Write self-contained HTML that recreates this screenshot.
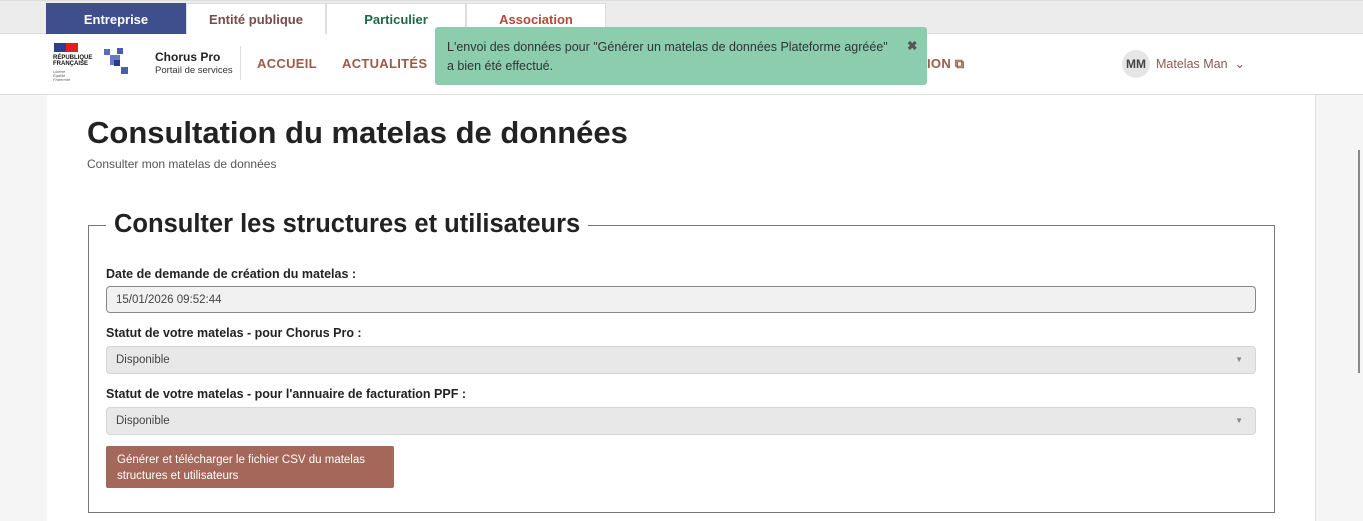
<!DOCTYPE html>
<html><head><meta charset="utf-8"><style>
*{box-sizing:border-box;margin:0;padding:0}
body{width:1363px;height:521px;overflow:hidden;background:#f5f5f5;font-family:"Liberation Sans",sans-serif;position:relative}
.top{position:absolute;left:0;top:0;width:1363px;height:34px;background:#ececec;border-top:1px solid #ddd;border-bottom:1px solid #ddd}
.tab{position:absolute;top:2px;height:32px;background:#fff;border:1px solid #ddd;border-bottom:none;font-size:13px;font-weight:bold;text-align:center;line-height:32px}
.hdr{position:absolute;left:0;top:34px;width:1363px;height:61px;background:#fff;border-bottom:1px solid #ddd}
.nav{position:absolute;top:22px;font-size:13px;font-weight:bold;color:#9a5b48;letter-spacing:.3px}
.main{position:absolute;left:47px;top:95px;width:1269px;height:426px;background:#fff;border-right:1px solid #ddd}
.toast{position:absolute;left:435px;top:27px;width:492px;height:58px;background:#8ccdae;border-radius:3px;font-size:12.5px;color:#333;padding:11px 12px;line-height:19px}
h1{position:absolute;left:87px;top:115px;font-size:31px;color:#222;font-weight:bold}
.sub{position:absolute;left:87px;top:157px;font-size:12px;color:#555}
.fs{position:absolute;left:88px;top:225px;width:1187px;height:288px;border:1px solid #777}
.legend{position:absolute;left:106px;top:210px;background:#fff;padding:0 8px;font-size:25.5px;font-weight:bold;color:#222}
.lbl{position:absolute;left:106px;font-size:12.5px;font-weight:bold;color:#222}
.in{position:absolute;left:106px;width:1150px;height:27px;border-radius:4px;font-size:11.5px;color:#444;padding-left:9px;line-height:26px}
.btn{position:absolute;left:106px;top:446px;width:288px;height:42px;background:#a4675a;border-radius:2px;color:#fff;font-size:11.5px;line-height:16px;padding:6px 11px}
</style></head><body>
<div class="top">
<div class="tab" style="left:46px;width:140px;background:#3f4e8c;color:#fff;border-color:#3f4e8c">Entreprise</div>
<div class="tab" style="left:186px;width:140px;color:#7a4a48">Entité publique</div>
<div class="tab" style="left:326px;width:140px;color:#1d6a4a">Particulier</div>
<div class="tab" style="left:466px;width:140px;color:#b24a3a">Association</div>
</div>
<div class="hdr">
<div style="position:absolute;left:54px;top:9px;width:12px;height:9px;background:#2b3f8f"></div>
<div style="position:absolute;left:66px;top:9px;width:12px;height:9px;background:#e02020"></div>
<div style="position:absolute;left:53px;top:21px;font-size:6px;font-weight:bold;line-height:6px;color:#111">RÉPUBLIQUE<br>FRANÇAISE</div>
<div style="position:absolute;left:53px;top:36px;font-size:4px;line-height:4px;color:#666;font-style:italic">Liberté<br>Égalité<br>Fraternité</div>
<svg style="position:absolute;left:102px;top:13px" width="28" height="30"><rect x="2" y="2" width="6" height="6" fill="#5a6cc0"/><rect x="15" y="1" width="6" height="6" fill="#4a5cb0"/><rect x="8" y="8" width="10" height="10" fill="#6878c8"/><rect x="12" y="13" width="6" height="6" fill="#2b3a8a"/><rect x="19" y="20" width="7" height="7" fill="#4a5cb0"/></svg>
<div style="position:absolute;left:155px;top:16px;font-size:12px;font-weight:bold;color:#222">Chorus Pro</div>
<div style="position:absolute;left:155px;top:31px;font-size:9.5px;color:#333">Portail de services</div>
<div style="position:absolute;left:240px;top:12px;width:1px;height:34px;background:#ddd"></div>
<div class="nav" style="left:257px">ACCUEIL</div>
<div class="nav" style="left:342px">ACTUALITÉS</div>
<div class="nav" style="left:927px">ION ⧉</div>
<div style="position:absolute;left:1122px;top:16px;width:28px;height:28px;border-radius:50%;background:#e6e6e6;font-size:12px;font-weight:bold;color:#444;text-align:center;line-height:28px">MM</div>
<div style="position:absolute;left:1156px;top:22px;font-size:12.5px;color:#8a5a50">Matelas Man &nbsp;⌄</div>
</div>
<div class="main"></div>
<div style="position:absolute;left:1358px;top:150px;width:2px;height:223px;background:#888"></div>
<div class="toast">L'envoi des données pour "Générer un matelas de données Plateforme agréée"<br>a bien été effectué.<span style="position:absolute;left:472px;top:10px;font-weight:bold;color:#555">✖</span></div>
<h1>Consultation du matelas de données</h1>
<div class="sub">Consulter mon matelas de données</div>
<div class="fs"></div>
<div class="legend">Consulter les structures et utilisateurs</div>
<div class="lbl" style="top:267px">Date de demande de création du matelas :</div>
<div class="in" style="top:286px;background:#f1f1f1;border:1px solid #888">15/01/2026 09:52:44</div>
<div class="lbl" style="top:326px">Statut de votre matelas - pour Chorus Pro :</div>
<div class="in" style="top:346px;background:#e8e8e8;border:1px solid #d5d5d5;height:28px">Disponible<span style="position:absolute;right:12px;font-size:8px;color:#888">▼</span></div>
<div class="lbl" style="top:387px">Statut de votre matelas - pour l'annuaire de facturation PPF :</div>
<div class="in" style="top:407px;background:#e8e8e8;border:1px solid #d5d5d5;height:28px">Disponible<span style="position:absolute;right:12px;font-size:8px;color:#888">▼</span></div>
<div class="btn">Générer et télécharger le fichier CSV du matelas structures et utilisateurs</div>
</body></html>
